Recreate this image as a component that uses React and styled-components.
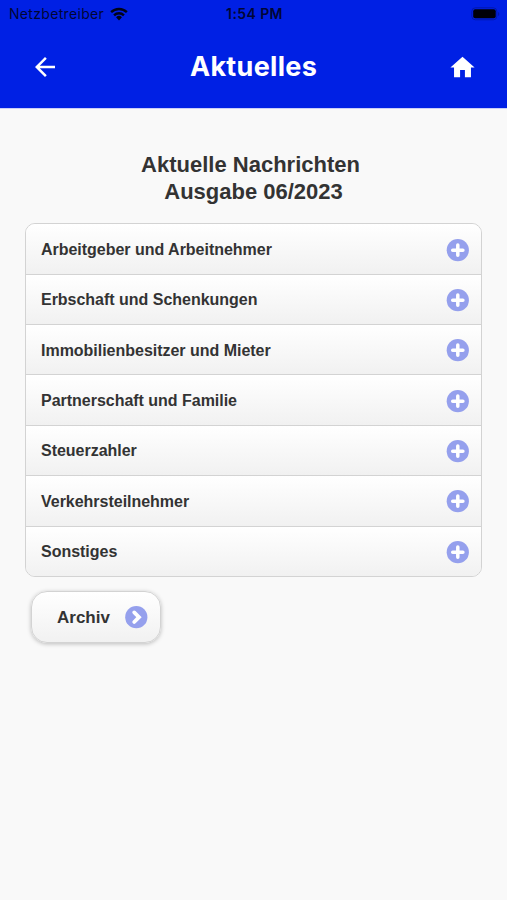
import React from "react";
import styled, { createGlobalStyle } from "styled-components";

const GlobalStyle = createGlobalStyle`
  * {
    box-sizing: border-box;
  }
  body {
    margin: 0;
    background: #f9f9f9;
    font-family: "Liberation Sans", Arial, sans-serif;
    color: #333;
  }
`;
const Page = styled.div`
  min-height: 100vh;
  background: #f9f9f9;
`;
const Header = styled.header`
  height: 109px;
  background: #0020e4;
  border-bottom: 1px solid #c9cff8;
`;
const StatusBar = styled.div`
  display: grid;
  grid-template-columns: 1fr auto 1fr;
  align-items: center;
  height: 27px;
  padding: 0 7px 0 9px;
  font-family: Inter, sans-serif;
  font-size: 14px;
  color: #000635;
`;
const Carrier = styled.div`
  display: flex;
  align-items: center;
  gap: 6px;
  letter-spacing: 0.32px;
`;
const Time = styled.span`
  font-size: 14px;
  font-weight: 600;
  letter-spacing: 0.4px;
`;
const Battery = styled.svg`
  justify-self: end;
`;
const NavBar = styled.div`
  display: grid;
  grid-template-columns: 1fr auto 1fr;
  align-items: center;
  height: 80px;
  padding: 0 30px;
  color: #fff;
`;
const NavButton = styled.a`
  display: flex;
  justify-self: ${(props) => props.$align};
`;
const NavTitle = styled.h1`
  margin: 0;
  padding-bottom: 1px;
  font-family: Inter, sans-serif;
  font-size: 27px;
  font-weight: 700;
  letter-spacing: 0.3px;
`;
const Content = styled.main`
  padding: 42px 25px 0;
`;
const Heading = styled.h2`
  margin: 0 0 18px;
  padding-right: 6px;
  font-size: 22px;
  line-height: 27px;
  text-align: center;
`;
const List = styled.ul`
  margin: 0;
  padding: 0;
  list-style: none;
  border: 1px solid #d3d3d3;
  border-radius: 10px;
  overflow: hidden;
`;
const Item = styled.li`
  display: flex;
  align-items: center;
  justify-content: space-between;
  height: 50.4px;
  padding: 2px 12px 0 15px;
  background: linear-gradient(#fff, #f1f1f1);
  font-size: 16px;
  font-weight: 700;
  letter-spacing: -0.02px;
  & + & {
    border-top: 1px solid #d3d3d3;
  }
  &:first-child {
    height: 49.6px;
    padding-top: 3px;
  }
`;
const Icon = styled.svg`
  display: block;
  flex: none;
`;
const ArchiveButton = styled.a`
  display: flex;
  align-items: center;
  justify-content: space-between;
  width: 130px;
  height: 52px;
  margin: 14px 0 0 6px;
  padding: 2px 12px 0 25px;
  border: 1px solid #d3d3d3;
  border-radius: 16px;
  background: linear-gradient(#fff, #f1f1f1);
  box-shadow: 0 1px 4px rgba(0, 0, 0, 0.25);
  font-size: 17px;
  font-weight: 700;
`;

const topics = [
  "Arbeitgeber und Arbeitnehmer",
  "Erbschaft und Schenkungen",
  "Immobilienbesitzer und Mieter",
  "Partnerschaft und Familie",
  "Steuerzahler",
  "Verkehrsteilnehmer",
  "Sonstiges",
];

function PlusIcon() {
  return (
    <Icon width="23" height="23" viewBox="0 0 23 23">
      <circle cx="11.8" cy="11.2" r="11.1" fill="#95a0ed" />
      <path
        d="M11.8 6.1v10.2M6.7 11.2h10.2"
        stroke="#fff"
        strokeWidth="3.5"
        strokeLinecap="round"
      />
    </Icon>
  );
}

function ChevronIcon() {
  return (
    <Icon width="23" height="23" viewBox="0 0 23 23">
      <circle cx="11.3" cy="11.2" r="11.1" fill="#95a0ed" />
      <path
        d="M9.2 6.4l4.8 4.8-4.8 4.8"
        fill="none"
        stroke="#fff"
        strokeWidth="3.8"
        strokeLinecap="round"
      />
    </Icon>
  );
}

function WifiIcon() {
  return (
    <Icon width="18" height="14" viewBox="0 0 19 14">
      <g fill="none" stroke="#000318" strokeWidth="2.5">
        <path d="M1.2 5.1a11.8 11.8 0 0 1 16.6 0" />
        <path d="M4.3 8.4a7.4 7.4 0 0 1 10.4 0" />
      </g>
      <path d="M6.4 10.4a4.5 4.5 0 0 1 6.2 0L9.5 13.8z" fill="#000318" />
    </Icon>
  );
}

function App() {
  return (
    <Page>
      <GlobalStyle />
      <Header>
        <StatusBar>
          <Carrier>
            <span>Netzbetreiber</span>
            <WifiIcon />
          </Carrier>
          <Time>1:54 PM</Time>
          <Battery width="29" height="14" viewBox="0 0 29 14">
            <rect
              x="0.8"
              y="0.8"
              width="25"
              height="12"
              rx="3.5"
              fill="none"
              stroke="#0018ae"
            />
            <rect x="2.2" y="2.3" width="22.5" height="9" rx="2" fill="#000008" />
            <path d="M27 5v4q1.4-.6 1.4-2T27 5" fill="#0018ae" />
          </Battery>
        </StatusBar>
        <NavBar>
          <NavButton $align="start" href="#back">
            <Icon width="30" height="30" viewBox="0 0 24 24" fill="#fff">
              <path d="M20 11H7.83l5.59-5.59L12 4l-8 8 8 8 1.41-1.41L7.83 13H20v-2z" />
            </Icon>
          </NavButton>
          <NavTitle>Aktuelles</NavTitle>
          <NavButton $align="end" href="#home">
            <Icon width="29" height="29" viewBox="0 0 24 24" fill="#fff">
              <path d="M10 20v-6h4v6h5v-8h3L12 3 2 12h3v8z" />
            </Icon>
          </NavButton>
        </NavBar>
      </Header>
      <Content>
        <Heading>
          Aktuelle Nachrichten
          <br />
          &nbsp;Ausgabe 06/2023
        </Heading>
        <List>
          {topics.map((topic) => (
            <Item key={topic}>
              {topic}
              <PlusIcon />
            </Item>
          ))}
        </List>
        <ArchiveButton>
          Archiv
          <ChevronIcon />
        </ArchiveButton>
      </Content>
    </Page>
  );
}

export default App;
